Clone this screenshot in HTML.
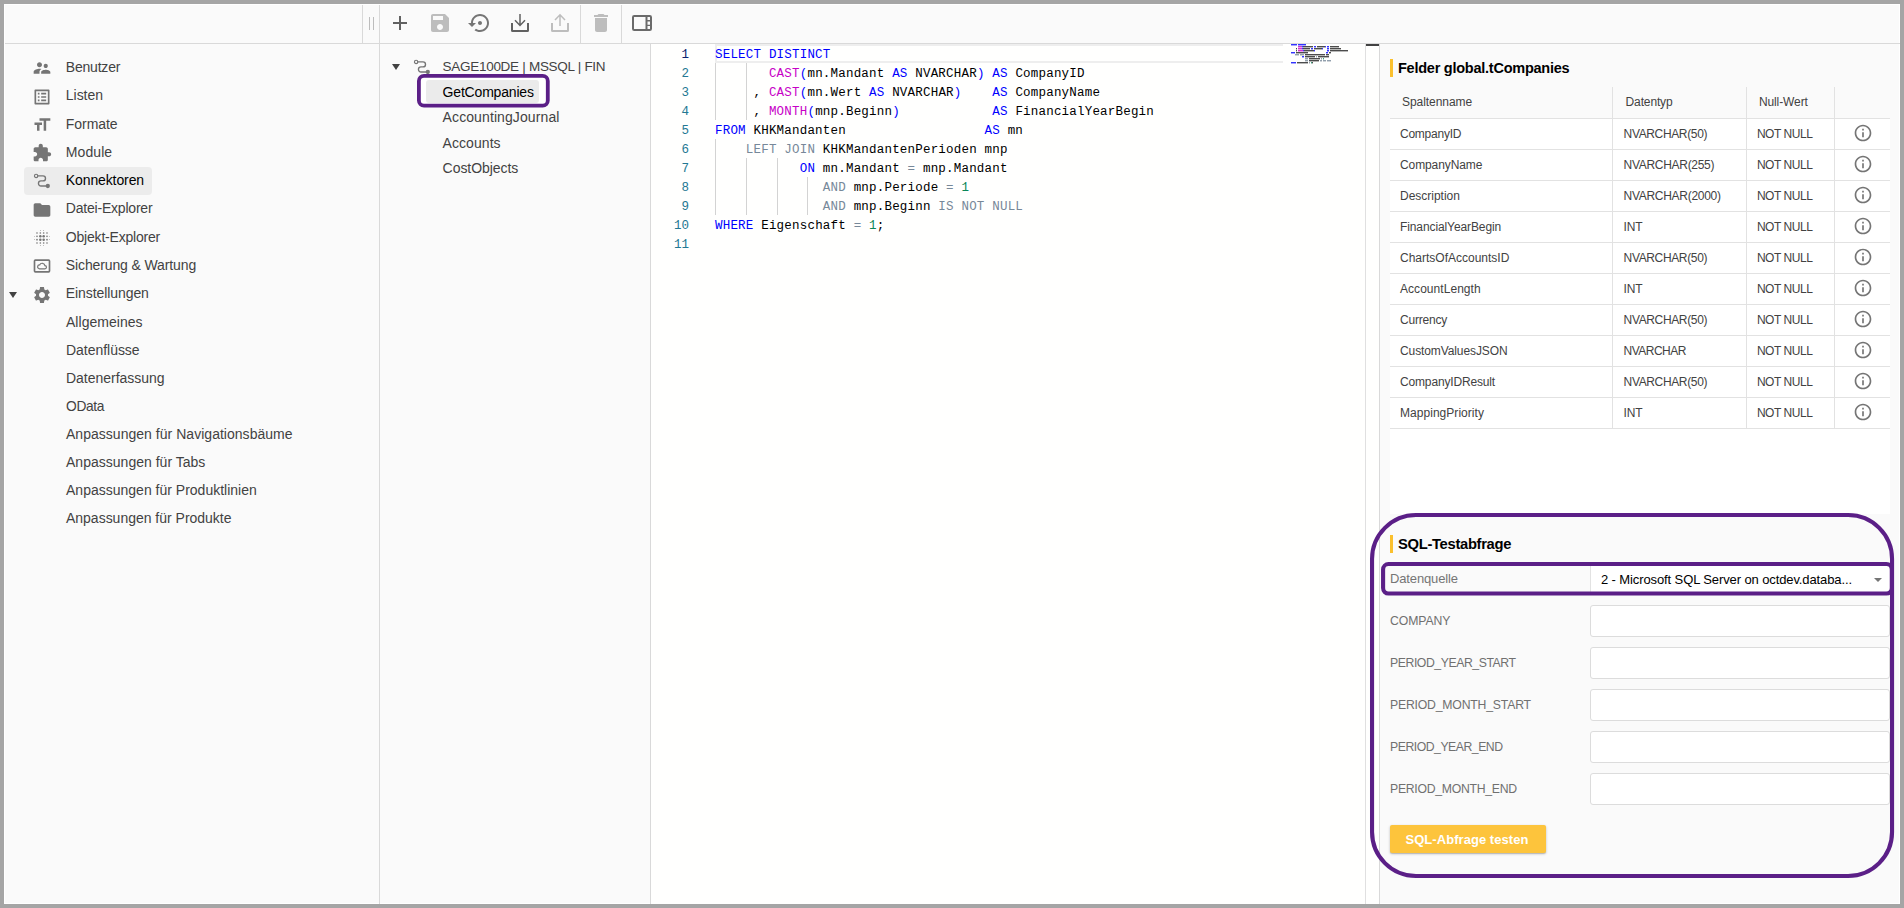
<!DOCTYPE html>
<html lang="de"><head><meta charset="utf-8"><title>Konnektoren</title>
<style>
html,body{margin:0;padding:0}
body{width:1904px;height:908px;overflow:hidden;background:#a5a5a5;font-family:"Liberation Sans",sans-serif;position:relative}
#app{position:absolute;left:4px;top:4px;width:1896px;height:900px;background:#fafafa;box-shadow:inset 0 0 0 1px #fff}
.abs{position:absolute}
.t{position:absolute;white-space:nowrap;line-height:20px;height:20px}
.ic{position:absolute;display:block}
.vl{position:absolute;width:1px;background:#d9d9d9}
.hl{position:absolute;height:1px;background:#d9d9d9}
.ln{position:absolute;left:651px;width:38px;text-align:right;color:#237893;font:12.500px/19px "Liberation Mono",monospace;padding-top:2px;height:17px}
.cl{position:absolute;left:715px;white-space:pre;color:#000;font:12.500px/19px "Liberation Mono",monospace;letter-spacing:.2px;padding-top:2px;height:17px}
.ck{color:#0000ff}.cf{color:#c700c7}.co{color:#778899}.cn{color:#098658}
.ig{position:absolute;width:1px;height:19px;background:#d3d3d3}
.inp{position:absolute;left:1590px;width:298px;height:30px;border:1px solid #dcdcdc;border-radius:3px;background:#fff}
</style></head><body>
<div id="app"></div>
<!-- editor -->
<div class="abs" style="left:651px;top:44px;width:729px;height:860px;background:#fffffe"></div>
<div class="abs" style="left:715px;top:44px;width:566px;height:15px;border:2px solid #eee;border-right:0"></div>
<div class="ln" style="top:44px;color:#0b216f">1</div>
<div class="cl" style="top:44px"><span class="ck">SELECT DISTINCT</span></div>
<div class="ln" style="top:63px">2</div>
<div class="cl" style="top:63px">       <span class="cf">CAST</span><span class="ck">(</span>mn.Mandant <span class="ck">AS</span> NVARCHAR<span class="ck">)</span> <span class="ck">AS</span> CompanyID</div>
<div class="ln" style="top:82px">3</div>
<div class="cl" style="top:82px">     , <span class="cf">CAST</span><span class="ck">(</span>mn.Wert <span class="ck">AS</span> NVARCHAR<span class="ck">)</span>    <span class="ck">AS</span> CompanyName</div>
<div class="ln" style="top:101px">4</div>
<div class="cl" style="top:101px">     , <span class="cf">MONTH</span><span class="ck">(</span>mnp.Beginn<span class="ck">)</span>            <span class="ck">AS</span> FinancialYearBegin</div>
<div class="ln" style="top:120px">5</div>
<div class="cl" style="top:120px"><span class="ck">FROM</span> KHKMandanten                  <span class="ck">AS</span> mn</div>
<div class="ln" style="top:139px">6</div>
<div class="cl" style="top:139px">    <span class="co">LEFT JOIN</span> KHKMandantenPerioden mnp</div>
<div class="ln" style="top:158px">7</div>
<div class="cl" style="top:158px">           <span class="ck">ON</span> mn.Mandant <span class="co">=</span> mnp.Mandant</div>
<div class="ln" style="top:177px">8</div>
<div class="cl" style="top:177px">              <span class="co">AND</span> mnp.Periode <span class="co">=</span> <span class="cn">1</span></div>
<div class="ln" style="top:196px">9</div>
<div class="cl" style="top:196px">              <span class="co">AND</span> mnp.Beginn <span class="co">IS NOT NULL</span></div>
<div class="ln" style="top:215px">10</div>
<div class="cl" style="top:215px"><span class="ck">WHERE</span> Eigenschaft <span class="co">=</span> <span class="cn">1</span>;</div>
<div class="ln" style="top:234px">11</div>
<div class="cl" style="top:234px"></div>
<div class="ig" style="left:715.00px;top:63px"></div>
<div class="ig" style="left:745.80px;top:63px"></div>
<div class="ig" style="left:715.00px;top:82px"></div>
<div class="ig" style="left:745.80px;top:82px"></div>
<div class="ig" style="left:715.00px;top:101px"></div>
<div class="ig" style="left:745.80px;top:101px"></div>
<div class="ig" style="left:715.00px;top:139px"></div>
<div class="ig" style="left:715.00px;top:158px"></div>
<div class="ig" style="left:745.80px;top:158px"></div>
<div class="ig" style="left:776.60px;top:158px"></div>
<div class="ig" style="left:715.00px;top:177px"></div>
<div class="ig" style="left:745.80px;top:177px"></div>
<div class="ig" style="left:776.60px;top:177px"></div>
<div class="ig" style="left:807.40px;top:177px"></div>
<div class="ig" style="left:715.00px;top:196px"></div>
<div class="ig" style="left:745.80px;top:196px"></div>
<div class="ig" style="left:776.60px;top:196px"></div>
<div class="ig" style="left:807.40px;top:196px"></div>
<svg class="ic" style="left:1291px;top:44px" width="60" height="24" viewBox="0 0 60 24"><rect x="0" y="0" width="6" height="1" fill="#0000ff" fill-opacity=".8"/><rect x="0" y="1" width="6" height="1" fill="#0000ff" fill-opacity=".35"/><rect x="7" y="0" width="8" height="1" fill="#0000ff" fill-opacity=".8"/><rect x="7" y="1" width="8" height="1" fill="#0000ff" fill-opacity=".35"/><rect x="7" y="2" width="4" height="1" fill="#c700c7" fill-opacity=".8"/><rect x="7" y="3" width="4" height="1" fill="#c700c7" fill-opacity=".35"/><rect x="11" y="2" width="1" height="1" fill="#0000ff" fill-opacity=".8"/><rect x="11" y="3" width="1" height="1" fill="#0000ff" fill-opacity=".35"/><rect x="12" y="2" width="10" height="1" fill="#000" fill-opacity=".7"/><rect x="12" y="3" width="10" height="1" fill="#000" fill-opacity=".28"/><rect x="23" y="2" width="2" height="1" fill="#0000ff" fill-opacity=".8"/><rect x="23" y="3" width="2" height="1" fill="#0000ff" fill-opacity=".35"/><rect x="26" y="2" width="8" height="1" fill="#000" fill-opacity=".7"/><rect x="26" y="3" width="8" height="1" fill="#000" fill-opacity=".28"/><rect x="34" y="2" width="1" height="1" fill="#0000ff" fill-opacity=".8"/><rect x="34" y="3" width="1" height="1" fill="#0000ff" fill-opacity=".35"/><rect x="36" y="2" width="2" height="1" fill="#0000ff" fill-opacity=".8"/><rect x="36" y="3" width="2" height="1" fill="#0000ff" fill-opacity=".35"/><rect x="39" y="2" width="9" height="1" fill="#000" fill-opacity=".7"/><rect x="39" y="3" width="9" height="1" fill="#000" fill-opacity=".28"/><rect x="5" y="4" width="1" height="1" fill="#000" fill-opacity=".7"/><rect x="5" y="5" width="1" height="1" fill="#000" fill-opacity=".28"/><rect x="7" y="4" width="4" height="1" fill="#c700c7" fill-opacity=".8"/><rect x="7" y="5" width="4" height="1" fill="#c700c7" fill-opacity=".35"/><rect x="11" y="4" width="1" height="1" fill="#0000ff" fill-opacity=".8"/><rect x="11" y="5" width="1" height="1" fill="#0000ff" fill-opacity=".35"/><rect x="12" y="4" width="7" height="1" fill="#000" fill-opacity=".7"/><rect x="12" y="5" width="7" height="1" fill="#000" fill-opacity=".28"/><rect x="20" y="4" width="2" height="1" fill="#0000ff" fill-opacity=".8"/><rect x="20" y="5" width="2" height="1" fill="#0000ff" fill-opacity=".35"/><rect x="23" y="4" width="8" height="1" fill="#000" fill-opacity=".7"/><rect x="23" y="5" width="8" height="1" fill="#000" fill-opacity=".28"/><rect x="31" y="4" width="1" height="1" fill="#0000ff" fill-opacity=".8"/><rect x="31" y="5" width="1" height="1" fill="#0000ff" fill-opacity=".35"/><rect x="36" y="4" width="2" height="1" fill="#0000ff" fill-opacity=".8"/><rect x="36" y="5" width="2" height="1" fill="#0000ff" fill-opacity=".35"/><rect x="39" y="4" width="11" height="1" fill="#000" fill-opacity=".7"/><rect x="39" y="5" width="11" height="1" fill="#000" fill-opacity=".28"/><rect x="5" y="6" width="1" height="1" fill="#000" fill-opacity=".7"/><rect x="5" y="7" width="1" height="1" fill="#000" fill-opacity=".28"/><rect x="7" y="6" width="5" height="1" fill="#c700c7" fill-opacity=".8"/><rect x="7" y="7" width="5" height="1" fill="#c700c7" fill-opacity=".35"/><rect x="12" y="6" width="1" height="1" fill="#0000ff" fill-opacity=".8"/><rect x="12" y="7" width="1" height="1" fill="#0000ff" fill-opacity=".35"/><rect x="13" y="6" width="10" height="1" fill="#000" fill-opacity=".7"/><rect x="13" y="7" width="10" height="1" fill="#000" fill-opacity=".28"/><rect x="23" y="6" width="1" height="1" fill="#0000ff" fill-opacity=".8"/><rect x="23" y="7" width="1" height="1" fill="#0000ff" fill-opacity=".35"/><rect x="36" y="6" width="2" height="1" fill="#0000ff" fill-opacity=".8"/><rect x="36" y="7" width="2" height="1" fill="#0000ff" fill-opacity=".35"/><rect x="39" y="6" width="18" height="1" fill="#000" fill-opacity=".7"/><rect x="39" y="7" width="18" height="1" fill="#000" fill-opacity=".28"/><rect x="0" y="8" width="4" height="1" fill="#0000ff" fill-opacity=".8"/><rect x="0" y="9" width="4" height="1" fill="#0000ff" fill-opacity=".35"/><rect x="5" y="8" width="12" height="1" fill="#000" fill-opacity=".7"/><rect x="5" y="9" width="12" height="1" fill="#000" fill-opacity=".28"/><rect x="35" y="8" width="2" height="1" fill="#0000ff" fill-opacity=".8"/><rect x="35" y="9" width="2" height="1" fill="#0000ff" fill-opacity=".35"/><rect x="38" y="8" width="2" height="1" fill="#000" fill-opacity=".7"/><rect x="38" y="9" width="2" height="1" fill="#000" fill-opacity=".28"/><rect x="4" y="10" width="4" height="1" fill="#778899" fill-opacity=".8"/><rect x="4" y="11" width="4" height="1" fill="#778899" fill-opacity=".35"/><rect x="9" y="10" width="4" height="1" fill="#778899" fill-opacity=".8"/><rect x="9" y="11" width="4" height="1" fill="#778899" fill-opacity=".35"/><rect x="14" y="10" width="20" height="1" fill="#000" fill-opacity=".7"/><rect x="14" y="11" width="20" height="1" fill="#000" fill-opacity=".28"/><rect x="35" y="10" width="3" height="1" fill="#000" fill-opacity=".7"/><rect x="35" y="11" width="3" height="1" fill="#000" fill-opacity=".28"/><rect x="11" y="12" width="2" height="1" fill="#0000ff" fill-opacity=".8"/><rect x="11" y="13" width="2" height="1" fill="#0000ff" fill-opacity=".35"/><rect x="14" y="12" width="10" height="1" fill="#000" fill-opacity=".7"/><rect x="14" y="13" width="10" height="1" fill="#000" fill-opacity=".28"/><rect x="25" y="12" width="1" height="1" fill="#778899" fill-opacity=".8"/><rect x="25" y="13" width="1" height="1" fill="#778899" fill-opacity=".35"/><rect x="27" y="12" width="11" height="1" fill="#000" fill-opacity=".7"/><rect x="27" y="13" width="11" height="1" fill="#000" fill-opacity=".28"/><rect x="14" y="14" width="3" height="1" fill="#778899" fill-opacity=".8"/><rect x="14" y="15" width="3" height="1" fill="#778899" fill-opacity=".35"/><rect x="18" y="14" width="11" height="1" fill="#000" fill-opacity=".7"/><rect x="18" y="15" width="11" height="1" fill="#000" fill-opacity=".28"/><rect x="30" y="14" width="1" height="1" fill="#778899" fill-opacity=".8"/><rect x="30" y="15" width="1" height="1" fill="#778899" fill-opacity=".35"/><rect x="32" y="14" width="1" height="1" fill="#098658" fill-opacity=".8"/><rect x="32" y="15" width="1" height="1" fill="#098658" fill-opacity=".35"/><rect x="14" y="16" width="3" height="1" fill="#778899" fill-opacity=".8"/><rect x="14" y="17" width="3" height="1" fill="#778899" fill-opacity=".35"/><rect x="18" y="16" width="10" height="1" fill="#000" fill-opacity=".7"/><rect x="18" y="17" width="10" height="1" fill="#000" fill-opacity=".28"/><rect x="29" y="16" width="2" height="1" fill="#778899" fill-opacity=".8"/><rect x="29" y="17" width="2" height="1" fill="#778899" fill-opacity=".35"/><rect x="32" y="16" width="3" height="1" fill="#778899" fill-opacity=".8"/><rect x="32" y="17" width="3" height="1" fill="#778899" fill-opacity=".35"/><rect x="36" y="16" width="4" height="1" fill="#778899" fill-opacity=".8"/><rect x="36" y="17" width="4" height="1" fill="#778899" fill-opacity=".35"/><rect x="0" y="18" width="5" height="1" fill="#0000ff" fill-opacity=".8"/><rect x="0" y="19" width="5" height="1" fill="#0000ff" fill-opacity=".35"/><rect x="6" y="18" width="11" height="1" fill="#000" fill-opacity=".7"/><rect x="6" y="19" width="11" height="1" fill="#000" fill-opacity=".28"/><rect x="18" y="18" width="1" height="1" fill="#778899" fill-opacity=".8"/><rect x="18" y="19" width="1" height="1" fill="#778899" fill-opacity=".35"/><rect x="20" y="18" width="1" height="1" fill="#098658" fill-opacity=".8"/><rect x="20" y="19" width="1" height="1" fill="#098658" fill-opacity=".35"/><rect x="21" y="18" width="1" height="1" fill="#000" fill-opacity=".7"/><rect x="21" y="19" width="1" height="1" fill="#000" fill-opacity=".28"/></svg>
<div class="vl" style="left:1365px;top:44px;height:860px;background:#e0e0e0"></div>
<div class="vl" style="left:1379px;top:44px;height:860px;background:#d9d9d9"></div>
<div class="abs" style="left:1366px;top:44px;width:13px;height:2px;background:#424242"></div>
<!-- chrome lines -->
<div class="hl" style="left:5px;top:43px;width:1895px"></div>
<div class="vl" style="left:362px;top:5px;height:38px"></div>
<div class="vl" style="left:379px;top:5px;height:899px"></div>
<div class="vl" style="left:580px;top:5px;height:38px"></div>
<div class="vl" style="left:621px;top:5px;height:38px"></div>
<div class="vl" style="left:650px;top:44px;height:860px"></div>
<div class="abs" style="left:369px;top:17px;width:1px;height:13px;background:#bdbdbd"></div>
<div class="abs" style="left:373px;top:17px;width:1px;height:13px;background:#bdbdbd"></div>
<svg class="ic" style="left:388px;top:11px" width="24" height="24" viewBox="0 0 24 24" fill="#616161"><path d="M19 13h-6v6h-2v-6H5v-2h6V5h2v6h6v2z"/></svg>
<svg class="ic" style="left:428px;top:11px" width="24" height="24" viewBox="0 0 24 24" fill="#bdbdbd"><path d="M17 3H5c-1.110 0-2 .9-2 2v14c0 1.100.89 2 2 2h14c1.100 0 2-.9 2-2V7l-4-4zm-5 16c-1.660 0-3-1.340-3-3s1.340-3 3-3 3 1.340 3 3-1.340 3-3 3zm3-10H5V5h10v4z"/></svg>
<svg class="ic" style="left:468px;top:11px" width="24" height="24" viewBox="0 0 24 24" fill="#757575"><path d="M14 12c0-1.100-.9-2-2-2s-2 .9-2 2 .9 2 2 2 2-.9 2-2zm-2-9c-4.970 0-9 4.030-9 9H0l4 4 4-4H5c0-3.870 3.130-7 7-7s7 3.130 7 7-3.130 7-7 7c-1.510 0-2.910-.49-4.060-1.300l-1.420 1.440C8.040 20.300 9.940 21 12 21c4.970 0 9-4.030 9-9s-4.030-9-9-9z"/></svg>
<svg class="ic" style="left:508px;top:11px" width="24" height="24" viewBox="0 0 24 24" fill="none" stroke="#616161" stroke-width="2"><path d="M4 12v7.500a.5.500 0 0 0 .5.500h15a.5.500 0 0 0 .5-.5V12" stroke-linejoin="round"/><path d="M12 3v11.500M7 9.300l5 5.200 5-5.200" stroke-width="1.500"/></svg>
<svg class="ic" style="left:548px;top:11px" width="24" height="24" viewBox="0 0 24 24" fill="none" stroke="#bdbdbd" stroke-width="2"><path d="M4 12v7.500a.5.500 0 0 0 .5.500h15a.5.500 0 0 0 .5-.5V12" stroke-linejoin="round"/><path d="M12 15V3.800M7 9l5-5.200 5 5.200" stroke-width="1.500"/></svg>
<svg class="ic" style="left:589px;top:11px" width="24" height="24" viewBox="0 0 24 24" fill="#bdbdbd"><path d="M6 19c0 1.100.9 2 2 2h8c1.100 0 2-.9 2-2V7H6v12zM19 4h-3.500l-1-1h-5l-1 1H5v2h14V4z"/></svg>
<svg class="ic" style="left:630px;top:11px" width="24" height="24" viewBox="0 0 24 24" fill="none" stroke="#6a6a6a"><rect x="3" y="5" width="18" height="14" rx="1.200" stroke-width="2"/><path d="M16.500 5v14" stroke-width="2"/><path d="M16.500 9.700H21M16.500 14.400H21" stroke-width="1.400"/></svg>
<!-- sidebar -->
<div class="abs" style="left:24px;top:167px;width:128px;height:28px;border-radius:4px;background:#ececec"></div>
<div class="abs" style="left:9px;top:292px;width:0;height:0;border-left:4px solid transparent;border-right:4px solid transparent;border-top:6px solid #424242"></div>
<svg class="ic" style="left:31.8px;top:58.1px" width="20" height="20" viewBox="0 0 24 24" fill="#757575"><path d="M16.5 12c1.38 0 2.49-1.12 2.49-2.5S17.88 7 16.5 7C15.12 7 14 8.12 14 9.5s1.12 2.5 2.5 2.5zM9 11c1.66 0 2.99-1.34 2.99-3S10.660 5 9 5C7.34 5 6 6.34 6 8s1.34 3 3 3zm7.5 3c-1.83 0-5.5.92-5.5 2.750V19h11v-2.250c0-1.830-3.670-2.750-5.500-2.750zM9 13c-2.330 0-7 1.170-7 3.500V19h7v-2.250c0-.85.33-2.340 2.370-3.470C10.500 13.100 9.660 13 9 13z"/></svg>
<svg class="ic" style="left:31.8px;top:86.6px" width="20" height="20" viewBox="0 0 24 24" fill="#757575"><path d="M19 5v14H5V5h14m1.100-2H3.900c-.5 0-.9.4-.9.9v16.200c0 .4.4.9.9.9h16.200c.4 0 .9-.5.9-.9V3.900c0-.5-.5-.9-.9-.9zM11 7h6v2h-6V7zm0 4h6v2h-6v-2zm0 4h6v2h-6zM7 7h2v2H7zm0 4h2v2H7zm0 4h2v2H7z"/></svg>
<svg class="ic" style="left:31.8px;top:115px" width="20" height="20" viewBox="0 0 24 24" fill="#757575"><path d="M9 4v3h5v12h3V7h5V4H9zm-6 8h3v7h3v-7h3V9H3v3z"/></svg>
<svg class="ic" style="left:31.8px;top:143px" width="20" height="20" viewBox="0 0 24 24" fill="#757575"><path d="M20.500 11H19V7c0-1.100-.9-2-2-2h-4V3.500C13 2.120 11.880 1 10.500 1S8 2.120 8 3.500V5H4c-1.100 0-1.990.9-1.990 2v3.800H3.500c1.490 0 2.700 1.210 2.700 2.700s-1.210 2.700-2.700 2.700H2V20c0 1.100.9 2 2 2h3.800v-1.500c0-1.490 1.210-2.700 2.700-2.700 1.490 0 2.700 1.210 2.700 2.700V22H17c1.100 0 2-.9 2-2v-4h1.500c1.380 0 2.500-1.120 2.500-2.500S21.880 11 20.500 11z"/></svg>
<svg class="ic" style="left:32px;top:171.25px" width="20" height="20" viewBox="0 0 20 20"><circle cx="4.100" cy="4.900" r="1.650" fill="none" stroke="#757575" stroke-width="1.200"/><path d="M5.900 4.900H11A2.500 2.500 0 0 1 11 9.900H9A2.550 2.550 0 0 0 9 15H14" fill="none" stroke="#757575" stroke-width="1.350"/><circle cx="15.800" cy="15" r="2.150" fill="#757575"/></svg>
<svg class="ic" style="left:31.8px;top:200.1px" width="20" height="20" viewBox="0 0 24 24" fill="#757575"><path d="M10 4H4c-1.100 0-1.990.9-1.990 2L2 18c0 1.100.9 2 2 2h16c1.100 0 2-.9 2-2V8c0-1.100-.9-2-2-2h-8l-2-2z"/></svg>
<svg class="ic" style="left:31.8px;top:228px" width="20" height="20" viewBox="0 0 24 24" fill="#757575"><circle cx="6" cy="6" r="1"/><circle cx="6" cy="10" r="1"/><circle cx="6" cy="14" r="1"/><circle cx="6" cy="18" r="1"/><circle cx="10" cy="6" r="1"/><circle cx="10" cy="10" r="1.5"/><circle cx="10" cy="14" r="1.5"/><circle cx="10" cy="18" r="1"/><circle cx="14" cy="6" r="1"/><circle cx="14" cy="10" r="1.5"/><circle cx="14" cy="14" r="1.5"/><circle cx="14" cy="18" r="1"/><circle cx="18" cy="6" r="1"/><circle cx="18" cy="10" r="1"/><circle cx="18" cy="14" r="1"/><circle cx="18" cy="18" r="1"/><circle cx="10" cy="3" r=".5"/><circle cx="3" cy="10" r=".5"/><circle cx="10" cy="21" r=".5"/><circle cx="21" cy="10" r=".5"/><circle cx="14" cy="3" r=".5"/><circle cx="3" cy="14" r=".5"/><circle cx="14" cy="21" r=".5"/><circle cx="21" cy="14" r=".5"/></svg>
<svg class="ic" style="left:31.8px;top:256.1px" width="20" height="20" viewBox="0 0 24 24" fill="#757575"><rect x="3" y="5" width="18" height="14" rx="1" fill="none" stroke="#757575" stroke-width="2"/><path d="M9 15.400h6.400a1.900 1.900 0 0 0 .1-3.800 3.300 3.300 0 0 0-6.300-.9A2.350 2.350 0 0 0 9 15.400z" fill="none" stroke="#757575" stroke-width="1.450"/></svg>
<svg class="ic" style="left:31.8px;top:285px" width="20" height="20" viewBox="0 0 24 24" fill="#757575"><path d="M19.140 12.940c.04-.3.06-.61.06-.94 0-.32-.02-.64-.07-.94l2.030-1.580c.18-.14.23-.41.12-.61l-1.920-3.320c-.12-.22-.37-.29-.59-.22l-2.390.96c-.5-.38-1.030-.7-1.620-.94l-.36-2.540c-.04-.24-.24-.41-.48-.41h-3.840c-.24 0-.43.17-.47.41l-.36 2.540c-.59.24-1.130.57-1.620.94l-2.390-.96c-.22-.08-.47 0-.59.22L2.740 8.870c-.12.21-.08.47.12.61l2.030 1.580c-.05.3-.09.63-.09.94s.02.64.07.94l-2.030 1.580c-.18.14-.23.41-.12.61l1.920 3.320c.12.22.37.29.59.22l2.390-.96c.5.38 1.030.7 1.620.94l.36 2.540c.05.24.24.41.48.41h3.840c.24 0 .44-.17.47-.41l.36-2.540c.59-.24 1.130-.56 1.620-.94l2.390.96c.22.08.47 0 .59-.22l1.920-3.320c.12-.22.07-.47-.12-.61l-2.010-1.580zM12 15.600c-1.980 0-3.600-1.620-3.600-3.600s1.620-3.600 3.600-3.600 3.600 1.620 3.600 3.600-1.620 3.600-3.600 3.600z"/></svg>
<!-- tree -->
<div class="abs" style="left:392px;top:64px;width:0;height:0;border-left:4px solid transparent;border-right:4px solid transparent;border-top:6px solid #424242"></div>
<svg class="ic" style="left:411.8px;top:57.1px" width="20" height="20" viewBox="0 0 20 20"><circle cx="4.100" cy="4.900" r="1.650" fill="none" stroke="#757575" stroke-width="1.200"/><path d="M5.900 4.900H11A2.500 2.500 0 0 1 11 9.900H9A2.550 2.550 0 0 0 9 15H14" fill="none" stroke="#757575" stroke-width="1.350"/><circle cx="15.800" cy="15" r="2.150" fill="#757575"/></svg>
<svg class="ic" style="left:415.20px;top:72.30px" width="136.70" height="37.60" viewBox="0 0 136.70 37.60"><rect x="3.90" y="3.90" width="128.90" height="29.80" rx="5.10" fill="#fff" stroke="#5b1f87" stroke-width="3.80"/></svg>
<div class="abs" style="left:426px;top:80px;width:113px;height:23px;border-radius:3px;background:#ebebeb"></div>
<!-- right panel -->
<div class="abs" style="left:1390px;top:59px;width:3px;height:18px;background:#fbc02d"></div>
<div class="abs" style="left:1390px;top:535px;width:3px;height:18px;background:#fbc02d"></div>
<div class="abs" style="left:1390px;top:87px;width:500px;height:427px;background:#fff"></div>
<div class="abs" style="left:1390px;top:87px;width:500px;height:31px;background:#fafafa"></div>
<div class="abs" style="left:1390px;top:118px;width:500px;height:1px;background:#e2e2e2"></div>
<div class="abs" style="left:1390px;top:149px;width:500px;height:1px;background:#e2e2e2"></div>
<div class="abs" style="left:1390px;top:180px;width:500px;height:1px;background:#e2e2e2"></div>
<div class="abs" style="left:1390px;top:211px;width:500px;height:1px;background:#e2e2e2"></div>
<div class="abs" style="left:1390px;top:242px;width:500px;height:1px;background:#e2e2e2"></div>
<div class="abs" style="left:1390px;top:273px;width:500px;height:1px;background:#e2e2e2"></div>
<div class="abs" style="left:1390px;top:304px;width:500px;height:1px;background:#e2e2e2"></div>
<div class="abs" style="left:1390px;top:335px;width:500px;height:1px;background:#e2e2e2"></div>
<div class="abs" style="left:1390px;top:366px;width:500px;height:1px;background:#e2e2e2"></div>
<div class="abs" style="left:1390px;top:397px;width:500px;height:1px;background:#e2e2e2"></div>
<div class="abs" style="left:1390px;top:428px;width:500px;height:1px;background:#e2e2e2"></div>
<div class="abs" style="left:1612px;top:87px;width:1px;height:342px;background:#e2e2e2"></div>
<div class="abs" style="left:1746px;top:87px;width:1px;height:342px;background:#e2e2e2"></div>
<div class="abs" style="left:1834px;top:87px;width:1px;height:342px;background:#e2e2e2"></div>
<svg class="ic" style="left:1853px;top:123px" width="20" height="20" viewBox="0 0 24 24" fill="#757575"><path d="M11 17h2v-6h-2v6zm1-15C6.480 2 2 6.480 2 12s4.480 10 10 10 10-4.480 10-10S17.520 2 12 2zm0 18c-4.410 0-8-3.590-8-8s3.590-8 8-8 8 3.590 8 8-3.590 8-8 8zM11 9h2V7h-2v2z"/></svg>
<svg class="ic" style="left:1853px;top:154px" width="20" height="20" viewBox="0 0 24 24" fill="#757575"><path d="M11 17h2v-6h-2v6zm1-15C6.480 2 2 6.480 2 12s4.480 10 10 10 10-4.480 10-10S17.520 2 12 2zm0 18c-4.410 0-8-3.590-8-8s3.590-8 8-8 8 3.590 8 8-3.590 8-8 8zM11 9h2V7h-2v2z"/></svg>
<svg class="ic" style="left:1853px;top:185px" width="20" height="20" viewBox="0 0 24 24" fill="#757575"><path d="M11 17h2v-6h-2v6zm1-15C6.480 2 2 6.480 2 12s4.480 10 10 10 10-4.480 10-10S17.520 2 12 2zm0 18c-4.410 0-8-3.590-8-8s3.590-8 8-8 8 3.590 8 8-3.590 8-8 8zM11 9h2V7h-2v2z"/></svg>
<svg class="ic" style="left:1853px;top:216px" width="20" height="20" viewBox="0 0 24 24" fill="#757575"><path d="M11 17h2v-6h-2v6zm1-15C6.480 2 2 6.480 2 12s4.480 10 10 10 10-4.480 10-10S17.520 2 12 2zm0 18c-4.410 0-8-3.590-8-8s3.590-8 8-8 8 3.590 8 8-3.590 8-8 8zM11 9h2V7h-2v2z"/></svg>
<svg class="ic" style="left:1853px;top:247px" width="20" height="20" viewBox="0 0 24 24" fill="#757575"><path d="M11 17h2v-6h-2v6zm1-15C6.480 2 2 6.480 2 12s4.480 10 10 10 10-4.480 10-10S17.520 2 12 2zm0 18c-4.410 0-8-3.590-8-8s3.590-8 8-8 8 3.590 8 8-3.590 8-8 8zM11 9h2V7h-2v2z"/></svg>
<svg class="ic" style="left:1853px;top:278px" width="20" height="20" viewBox="0 0 24 24" fill="#757575"><path d="M11 17h2v-6h-2v6zm1-15C6.480 2 2 6.480 2 12s4.480 10 10 10 10-4.480 10-10S17.520 2 12 2zm0 18c-4.410 0-8-3.590-8-8s3.590-8 8-8 8 3.590 8 8-3.590 8-8 8zM11 9h2V7h-2v2z"/></svg>
<svg class="ic" style="left:1853px;top:309px" width="20" height="20" viewBox="0 0 24 24" fill="#757575"><path d="M11 17h2v-6h-2v6zm1-15C6.480 2 2 6.480 2 12s4.480 10 10 10 10-4.480 10-10S17.520 2 12 2zm0 18c-4.410 0-8-3.590-8-8s3.590-8 8-8 8 3.590 8 8-3.590 8-8 8zM11 9h2V7h-2v2z"/></svg>
<svg class="ic" style="left:1853px;top:340px" width="20" height="20" viewBox="0 0 24 24" fill="#757575"><path d="M11 17h2v-6h-2v6zm1-15C6.480 2 2 6.480 2 12s4.480 10 10 10 10-4.480 10-10S17.520 2 12 2zm0 18c-4.410 0-8-3.590-8-8s3.590-8 8-8 8 3.590 8 8-3.590 8-8 8zM11 9h2V7h-2v2z"/></svg>
<svg class="ic" style="left:1853px;top:371px" width="20" height="20" viewBox="0 0 24 24" fill="#757575"><path d="M11 17h2v-6h-2v6zm1-15C6.480 2 2 6.480 2 12s4.480 10 10 10 10-4.480 10-10S17.520 2 12 2zm0 18c-4.410 0-8-3.590-8-8s3.590-8 8-8 8 3.590 8 8-3.590 8-8 8zM11 9h2V7h-2v2z"/></svg>
<svg class="ic" style="left:1853px;top:402px" width="20" height="20" viewBox="0 0 24 24" fill="#757575"><path d="M11 17h2v-6h-2v6zm1-15C6.480 2 2 6.480 2 12s4.480 10 10 10 10-4.480 10-10S17.520 2 12 2zm0 18c-4.410 0-8-3.590-8-8s3.590-8 8-8 8 3.590 8 8-3.590 8-8 8zM11 9h2V7h-2v2z"/></svg>
<div class="inp" style="top:605px"></div>
<div class="inp" style="top:647px"></div>
<div class="inp" style="top:689px"></div>
<div class="inp" style="top:731px"></div>
<div class="inp" style="top:773px"></div>
<div class="abs" style="left:1590px;top:563px;width:299px;height:32px;background:#fff;border-left:1px solid #e2e2e2"></div>
<div class="abs" style="left:1873.500px;top:578px;width:0;height:0;border-left:4.500px solid transparent;border-right:4.500px solid transparent;border-top:4.500px solid #757575"></div>
<div class="abs" style="left:1390px;top:825px;width:156px;height:28px;background:#fdc43c;border-radius:2px;box-shadow:0 1px 3px rgba(0,0,0,.2),0 1px 1px rgba(0,0,0,.14)"></div>
<span class="t" id="s0" style="left:65.80px;top:57.00px;font-size:14px;color:#424242;letter-spacing:-0.206px;">Benutzer</span>
<span class="t" id="s1" style="left:65.80px;top:85.00px;font-size:14px;color:#424242;letter-spacing:-0.027px;">Listen</span>
<span class="t" id="s2" style="left:65.80px;top:114.00px;font-size:14px;color:#424242;letter-spacing:-0.046px;">Formate</span>
<span class="t" id="s3" style="left:65.80px;top:142.00px;font-size:14px;color:#424242;letter-spacing:0.080px;">Module</span>
<span class="t" id="s4" style="left:65.80px;top:170.00px;font-size:14px;color:#000;letter-spacing:-0.110px;">Konnektoren</span>
<span class="t" id="s5" style="left:65.80px;top:198.00px;font-size:14px;color:#424242;letter-spacing:-0.206px;">Datei-Explorer</span>
<span class="t" id="s6" style="left:65.80px;top:227.00px;font-size:14px;color:#424242;letter-spacing:-0.198px;">Objekt-Explorer</span>
<span class="t" id="s7" style="left:65.80px;top:255.00px;font-size:14px;color:#424242;letter-spacing:-0.119px;">Sicherung &amp; Wartung</span>
<span class="t" id="s8" style="left:65.80px;top:283.00px;font-size:14px;color:#424242;letter-spacing:-0.082px;">Einstellungen</span>
<span class="t" id="s9" style="left:66.00px;top:312.00px;font-size:14px;color:#424242;letter-spacing:0.030px;">Allgemeines</span>
<span class="t" id="s10" style="left:66.00px;top:340.00px;font-size:14px;color:#424242;letter-spacing:-0.031px;">Datenflüsse</span>
<span class="t" id="s11" style="left:66.00px;top:368.00px;font-size:14px;color:#424242;letter-spacing:-0.017px;">Datenerfassung</span>
<span class="t" id="s12" style="left:66.00px;top:397.00px;font-size:13.75px;color:#424242;letter-spacing:-0.310px;">OData</span>
<span class="t" id="s13" style="left:66.00px;top:424.00px;font-size:14px;color:#424242;letter-spacing:0.028px;">Anpassungen für Navigationsbäume</span>
<span class="t" id="s14" style="left:66.00px;top:452.00px;font-size:14px;color:#424242;letter-spacing:0.016px;">Anpassungen für Tabs</span>
<span class="t" id="s15" style="left:66.00px;top:480.00px;font-size:14px;color:#424242;letter-spacing:0.004px;">Anpassungen für Produktlinien</span>
<span class="t" id="s16" style="left:66.00px;top:508.00px;font-size:14px;color:#424242;letter-spacing:-0.012px;">Anpassungen für Produkte</span>
<span class="t" id="t0" style="left:442.60px;top:57.00px;font-size:13.5px;color:#424242;letter-spacing:-0.288px;">SAGE100DE | MSSQL | FIN</span>
<span class="t" id="t1" style="left:442.60px;top:81.80px;font-size:14px;color:#000;letter-spacing:-0.183px;">GetCompanies</span>
<span class="t" id="t2" style="left:442.60px;top:107.20px;font-size:14px;color:#424242;letter-spacing:0.101px;">AccountingJournal</span>
<span class="t" id="t3" style="left:442.60px;top:132.80px;font-size:14px;color:#424242;letter-spacing:0.063px;">Accounts</span>
<span class="t" id="t4" style="left:442.60px;top:158.00px;font-size:14px;color:#424242;letter-spacing:-0.050px;">CostObjects</span>
<span class="t" id="h1" style="left:1398.00px;top:58.00px;font-size:14.5px;color:#000;font-weight:700;letter-spacing:-0.244px;">Felder global.tCompanies</span>
<span class="t" id="h2" style="left:1398.00px;top:534.00px;font-size:14.75px;color:#000;font-weight:700;letter-spacing:-0.310px;">SQL-Testabfrage</span>
<span class="t" id="th0" style="left:1402.00px;top:92.00px;font-size:12px;color:#424242;letter-spacing:-0.047px;">Spaltenname</span>
<span class="t" id="th1" style="left:1625.60px;top:92.00px;font-size:12px;color:#424242;letter-spacing:-0.141px;">Datentyp</span>
<span class="t" id="th2" style="left:1758.90px;top:92.00px;font-size:12px;color:#424242;letter-spacing:-0.098px;">Null-Wert</span>
<span class="t" id="ra0" style="left:1400.00px;top:124.00px;font-size:12px;color:#424242;letter-spacing:-0.240px;">CompanyID</span>
<span class="t" id="rb0" style="left:1623.60px;top:124.00px;font-size:12px;color:#424242;letter-spacing:-0.358px;">NVARCHAR(50)</span>
<span class="t" id="rc0" style="left:1756.90px;top:124.00px;font-size:12px;color:#424242;letter-spacing:-0.443px;">NOT NULL</span>
<span class="t" id="ra1" style="left:1400.00px;top:155.00px;font-size:12px;color:#424242;letter-spacing:-0.098px;">CompanyName</span>
<span class="t" id="rb1" style="left:1623.60px;top:155.00px;font-size:12px;color:#424242;letter-spacing:-0.298px;">NVARCHAR(255)</span>
<span class="t" id="rc1" style="left:1756.90px;top:155.00px;font-size:12px;color:#424242;letter-spacing:-0.443px;">NOT NULL</span>
<span class="t" id="ra2" style="left:1400.00px;top:186.00px;font-size:12px;color:#424242;letter-spacing:-0.012px;">Description</span>
<span class="t" id="rb2" style="left:1623.60px;top:186.00px;font-size:12px;color:#424242;letter-spacing:-0.296px;">NVARCHAR(2000)</span>
<span class="t" id="rc2" style="left:1756.90px;top:186.00px;font-size:12px;color:#424242;letter-spacing:-0.443px;">NOT NULL</span>
<span class="t" id="ra3" style="left:1400.00px;top:217.00px;font-size:12px;color:#424242;letter-spacing:-0.104px;">FinancialYearBegin</span>
<span class="t" id="rb3" style="left:1623.60px;top:217.00px;font-size:12px;color:#424242;letter-spacing:-0.115px;">INT</span>
<span class="t" id="rc3" style="left:1756.90px;top:217.00px;font-size:12px;color:#424242;letter-spacing:-0.443px;">NOT NULL</span>
<span class="t" id="ra4" style="left:1400.00px;top:248.00px;font-size:12px;color:#424242;letter-spacing:-0.004px;">ChartsOfAccountsID</span>
<span class="t" id="rb4" style="left:1623.60px;top:248.00px;font-size:12px;color:#424242;letter-spacing:-0.358px;">NVARCHAR(50)</span>
<span class="t" id="rc4" style="left:1756.90px;top:248.00px;font-size:12px;color:#424242;letter-spacing:-0.443px;">NOT NULL</span>
<span class="t" id="ra5" style="left:1400.00px;top:279.00px;font-size:12px;color:#424242;letter-spacing:0.049px;">AccountLength</span>
<span class="t" id="rb5" style="left:1623.60px;top:279.00px;font-size:12px;color:#424242;letter-spacing:-0.115px;">INT</span>
<span class="t" id="rc5" style="left:1756.90px;top:279.00px;font-size:12px;color:#424242;letter-spacing:-0.443px;">NOT NULL</span>
<span class="t" id="ra6" style="left:1400.00px;top:310.00px;font-size:12px;color:#424242;letter-spacing:-0.211px;">Currency</span>
<span class="t" id="rb6" style="left:1623.60px;top:310.00px;font-size:12px;color:#424242;letter-spacing:-0.358px;">NVARCHAR(50)</span>
<span class="t" id="rc6" style="left:1756.90px;top:310.00px;font-size:12px;color:#424242;letter-spacing:-0.443px;">NOT NULL</span>
<span class="t" id="ra7" style="left:1400.00px;top:341.00px;font-size:12px;color:#424242;letter-spacing:-0.104px;">CustomValuesJSON</span>
<span class="t" id="rb7" style="left:1623.60px;top:341.00px;font-size:12px;color:#424242;letter-spacing:-0.532px;">NVARCHAR</span>
<span class="t" id="rc7" style="left:1756.90px;top:341.00px;font-size:12px;color:#424242;letter-spacing:-0.443px;">NOT NULL</span>
<span class="t" id="ra8" style="left:1400.00px;top:372.00px;font-size:12px;color:#424242;letter-spacing:-0.158px;">CompanyIDResult</span>
<span class="t" id="rb8" style="left:1623.60px;top:372.00px;font-size:12px;color:#424242;letter-spacing:-0.358px;">NVARCHAR(50)</span>
<span class="t" id="rc8" style="left:1756.90px;top:372.00px;font-size:12px;color:#424242;letter-spacing:-0.443px;">NOT NULL</span>
<span class="t" id="ra9" style="left:1400.00px;top:403.00px;font-size:12px;color:#424242;letter-spacing:0.042px;">MappingPriority</span>
<span class="t" id="rb9" style="left:1623.60px;top:403.00px;font-size:12px;color:#424242;letter-spacing:-0.115px;">INT</span>
<span class="t" id="rc9" style="left:1756.90px;top:403.00px;font-size:12px;color:#424242;letter-spacing:-0.443px;">NOT NULL</span>
<span class="t" id="l0" style="left:1390.00px;top:568.50px;font-size:13px;color:#757575;letter-spacing:-0.145px;">Datenquelle</span>
<span class="t" id="dd" style="left:1601.00px;top:570.00px;font-size:13px;color:#000;letter-spacing:-0.111px;">2 - Microsoft SQL Server on octdev.databa...</span>
<span class="t" id="l1" style="left:1390.00px;top:611.00px;font-size:12.25px;color:#707070;letter-spacing:-0.090px;">COMPANY</span>
<span class="t" id="l2" style="left:1390.00px;top:653.00px;font-size:12.25px;color:#707070;letter-spacing:-0.434px;">PERIOD_YEAR_START</span>
<span class="t" id="l3" style="left:1390.00px;top:695.00px;font-size:12.25px;color:#707070;letter-spacing:-0.202px;">PERIOD_MONTH_START</span>
<span class="t" id="l4" style="left:1390.00px;top:737.00px;font-size:12.25px;color:#707070;letter-spacing:-0.482px;">PERIOD_YEAR_END</span>
<span class="t" id="l5" style="left:1390.00px;top:779.00px;font-size:12.25px;color:#707070;letter-spacing:-0.286px;">PERIOD_MONTH_END</span>
<span class="t" id="btn" style="left:1405.50px;top:829.50px;font-size:13px;color:#fff;font-weight:700;letter-spacing:0.046px;">SQL-Abfrage testen</span>
<!-- annotation overlays -->
<svg class="ic" style="left:1379.20px;top:560.10px" width="516.90" height="37.60" viewBox="0 0 516.90 37.60"><rect x="4.05" y="4.05" width="508.80" height="29.50" rx="5.45" fill="none" stroke="#5b1f87" stroke-width="4.10"/></svg><svg class="ic" style="left:1368.00px;top:510.90px" width="528.10" height="369.00" viewBox="0 0 528.10 369.00"><rect x="4.05" y="4.05" width="520.00" height="360.90" rx="43.95" fill="none" stroke="#5b1f87" stroke-width="4.10"/></svg>
</body></html>
